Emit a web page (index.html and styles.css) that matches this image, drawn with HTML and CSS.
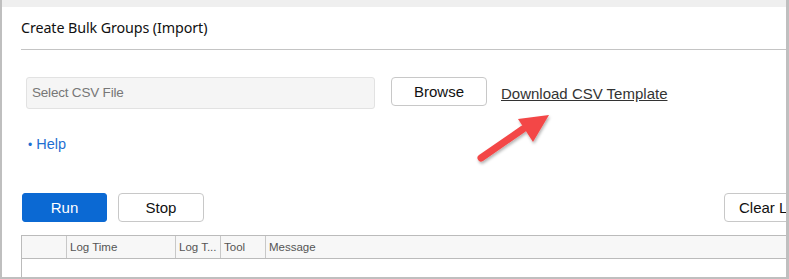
FILE: index.html
```html
<!DOCTYPE html>
<html>
<head>
<meta charset="utf-8">
<link rel="stylesheet" href="styles.css">
</head>
<body>
<div class="frame">
  <div class="topstrip"></div>
  <div class="panel">
    <div class="title">Create Bulk Groups (Import)</div>
    <div class="filerow">
      <div class="fileinput">Select CSV File</div>
      <button class="btn browse">Browse</button>
      <a class="tpl">Download CSV Template</a>
    </div>
    <div class="help"><span class="dot">•</span> Help</div>
    <div class="actions">
      <button class="btn run">Run</button>
      <button class="btn stop">Stop</button>
      <button class="btn clear">Clear Log</button>
    </div>
    <div class="table">
      <div class="thead">
        <div class="th c0"></div>
        <div class="th c1">Log Time</div>
        <div class="th c2">Log T...</div>
        <div class="th c3">Tool</div>
        <div class="th c4">Message</div>
      </div>
      <div class="tbody"></div>
    </div>
    <svg class="arrow" width="90" height="70" viewBox="0 0 90 70">
      <defs>
        <filter id="sh" x="-20%" y="-20%" width="140%" height="140%">
          <feDropShadow dx="1" dy="2" stdDeviation="1.5" flood-color="#000" flood-opacity="0.3"/>
        </filter>
      </defs>
      <g filter="url(#sh)">
        <line x1="10" y1="53" x2="52" y2="24" stroke="#f34747" stroke-width="7" stroke-linecap="round"/>
        <polygon points="78,10 47,14 62,37" fill="#f34747"/>
      </g>
    </svg>
  </div>
</div>
</body>
</html>
```
FILE: styles.css
```css
html, body {
  margin: 0;
  padding: 0;
  background: #ffffff;
}
.frame {
  width: 789px;
  height: 279px;
  box-sizing: border-box;
  border-left: 2px solid #bfbfbf;
  border-right: 3px solid #bfbfbf;
  border-bottom: 2px solid #bfbfbf;
  overflow: hidden;
  position: relative;
}
.topstrip {
  height: 7px;
  background: #efefef;
}
.panel {
  position: relative;
  padding-left: 19px;
  width: 900px;
}
.title {
  font-family: "Noto Sans", "Open Sans", sans-serif;
  font-size: 14.3px;
  color: #111;
  height: 42px;
  line-height: 42px;
  border-bottom: 1px solid #c4c4c4;
  width: 767px;
  letter-spacing: -0.1px;
}
.filerow {
  display: flex;
  align-items: center;
  margin-top: 26px;
  padding-left: 5px;
  height: 33px;
}
.fileinput {
  width: 349px;
  height: 32px;
  box-sizing: border-box;
  background: #f5f5f5;
  border: 1px solid #e2e2e2;
  border-radius: 3px;
  font-family: "Liberation Sans", Arial, sans-serif;
  font-size: 13.5px;
  color: #777;
  line-height: 30px;
  padding-left: 5px;
  letter-spacing: -0.2px;
}
.btn {
  font-family: "Liberation Sans", Arial, sans-serif;
  font-size: 15px;
  background: #fff;
  border: 1px solid #c8c8c8;
  border-radius: 4px;
  color: #111;
  box-sizing: border-box;
  height: 29px;
  padding: 0;
  cursor: pointer;
}
.browse {
  width: 96px;
  margin-left: 16px;
  margin-top: -2px;
}
.tpl {
  font-family: "Liberation Sans", Arial, sans-serif;
  font-size: 15px;
  color: #333;
  text-decoration: underline;
  margin-left: 14px;
  margin-top: 1px;
}
.help {
  font-family: "Liberation Sans", Arial, sans-serif;
  font-size: 14.5px;
  color: #1f6fd1;
  margin-top: 27px;
  padding-left: 7px;
  height: 16px;
  line-height: 16px;
}
.help .dot {
  font-size: 12px;
}
.actions {
  display: flex;
  align-items: center;
  margin-top: 41px;
  padding-left: 1px;
  height: 29px;
}
.run {
  width: 85px;
  background: #0b69d3;
  border-color: #0b69d3;
  color: #fff;
  border-radius: 3px;
}
.stop {
  width: 86px;
  margin-left: 11px;
}
.clear {
  width: 96px;
  margin-left: 520px;
  text-align: left;
  padding-left: 14px;
}
.table {
  margin-top: 13px;
  border-top: 1px solid #bbbbbb;
  border-left: 1px solid #bbbbbb;
  width: 900px;
}
.thead {
  display: flex;
  height: 22px;
  background: #f7f7f7;
  border-bottom: 1px solid #bbbbbb;
  font-family: "Liberation Sans", Arial, sans-serif;
  font-size: 11.5px;
  color: #555;
}
.th {
  box-sizing: border-box;
  line-height: 22px;
  padding-left: 3px;
  white-space: nowrap;
}
.th + .th {
  border-left: 1px solid #c8c8c8;
}
.c0 { width: 44px; }
.c1 { width: 109px; }
.c2 { width: 45px; }
.c3 { width: 45px; }
.c4 { flex: 1; }
.tbody {
  height: 30px;
}
.arrow {
  position: absolute;
  left: 469px;
  top: 98px;
}
```
